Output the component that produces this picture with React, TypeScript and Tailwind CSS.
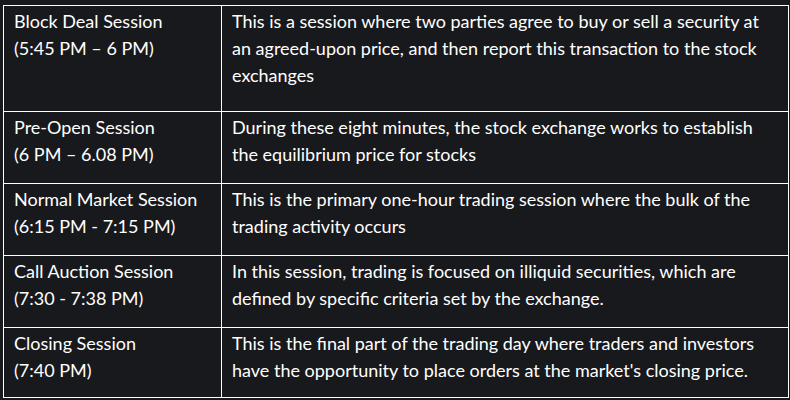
const rows = [
  {
    name: 'Block Deal Session',
    time: '(5:45 PM – 6 PM)',
    desc: 'This is a session where two parties agree to buy or sell a security at an agreed-upon price, and then report this transaction to the stock exchanges',
    h: 'h-[106px]',
  },
  {
    name: 'Pre-Open Session',
    time: '(6 PM – 6.08 PM)',
    desc: 'During these eight minutes, the stock exchange works to establish the equilibrium price for stocks',
    h: 'h-[72px]',
  },
  {
    name: 'Normal Market Session',
    time: '(6:15 PM - 7:15 PM)',
    desc: 'This is the primary one-hour trading session where the bulk of the trading activity occurs',
    h: 'h-[72px]',
  },
  {
    name: 'Call Auction Session',
    time: '(7:30 - 7:38 PM)',
    desc: 'In this session, trading is focused on illiquid securities, which are defined by specific criteria set by the exchange.',
    h: 'h-[72px]',
  },
  {
    name: 'Closing Session',
    time: '(7:40 PM)',
    desc: "This is the final part of the trading day where traders and investors have the opportunity to place orders at the market's closing price.",
    h: 'h-[70px]',
  },
];

export default function App() {
  return (
    <div className="h-[400px] w-[790px] bg-[#18191c] pl-[3px] pt-[5px] font-['Lato',sans-serif] text-[18px] leading-[27px] text-white">
      <table className="w-[786px] table-fixed border-collapse border border-white">
        <colgroup>
          <col className="w-[218px]" />
          <col />
        </colgroup>
        <tbody>
          {rows.map((r) => (
            <tr key={r.name} className={r.h}>
              <td className="border border-white px-[10px] pt-[2px] align-top">
                <div>{r.name}</div>
                <div>{r.time}</div>
              </td>
              <td className="border border-white px-[10px] pt-[2px] align-top">{r.desc}</td>
            </tr>
          ))}
        </tbody>
      </table>
    </div>
  );
}
